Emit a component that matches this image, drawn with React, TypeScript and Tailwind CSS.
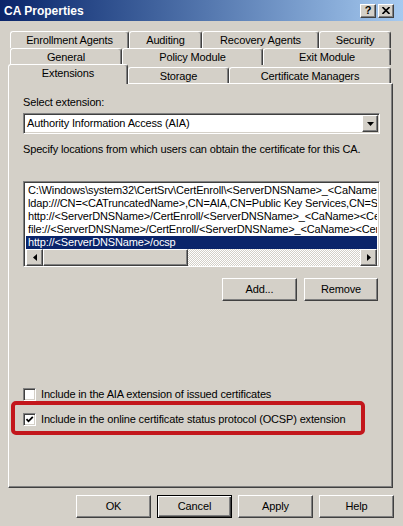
import React from 'react';

const raised =
  'border-t border-l border-t-white border-l-white border-r border-b border-r-[#404040] border-b-[#404040] shadow-[inset_-1px_-1px_#808080]';
const sunken =
  'border-t border-l border-t-[#808080] border-l-[#808080] border-r border-b border-r-white border-b-white shadow-[inset_1px_1px_#404040,inset_-1px_-1px_#d4d0c8]';

interface TabProps {
  label: string;
  width: string;
  selected?: boolean;
}

const Tab: React.FC<TabProps> = ({ label, width, selected }) => (
  <div
    className={`${width} ${
      selected ? 'relative z-10 h-[20px] pb-[3px]' : 'h-[17px]'
    } flex items-center justify-center bg-[#d4d0c8] border-t border-l border-white border-r border-r-[#404040] rounded-t-[3px] shadow-[inset_-1px_0_#808080]`}
  >
    {label}
  </div>
);

const Button: React.FC<{ label: string; width?: string; isDefault?: boolean }> = ({
  label,
  width = 'w-[75px]',
  isDefault,
}) =>
  isDefault ? (
    <button className={`${width} h-[23px] bg-[#d4d0c8] border border-black shadow-[inset_1px_1px_#fff,inset_-1px_-1px_#404040,inset_-2px_-2px_#808080]`}>
      {label}
    </button>
  ) : (
    <button className={`${width} h-[23px] bg-[#d4d0c8] ${raised}`}>{label}</button>
  );

const Checkbox: React.FC<{ checked?: boolean; label: string }> = ({ checked, label }) => (
  <div className="flex items-center h-[13px] gap-[5px]">
    <div className={`w-[13px] h-[13px] bg-white flex items-center justify-center ${sunken}`}>
      {checked && (
        <svg width="9" height="9" viewBox="0 0 9 9">
          <path d="M1.5 4.2 L3.5 6.3 L7.8 1.8" stroke="#000" strokeWidth="1.8" fill="none" />
        </svg>
      )}
    </div>
    <span>{label}</span>
  </div>
);

const listItems = [
  'C:\\Windows\\system32\\CertSrv\\CertEnroll\\<ServerDNSName>_<CaName><CertificateName>.crt',
  'ldap:///CN=<CATruncatedName>,CN=AIA,CN=Public Key Services,CN=Services,<ConfigurationContainer><CAObjectClass>',
  'http://<ServerDNSName>/CertEnroll/<ServerDNSName>_<CaName><CertificateName>.crt',
  'file://<ServerDNSName>/CertEnroll/<ServerDNSName>_<CaName><CertificateName>.crt',
  'http://<ServerDNSName>/ocsp',
];

const App: React.FC = () => {
  return (
    <div className="w-[403px] h-[526px] overflow-hidden bg-[#d4d0c8] text-black text-[11px] tracking-[-0.15px] font-['Tahoma','Liberation_Sans',sans-serif]">
      {/* title bar */}
      <div className="h-[21px] flex items-center justify-between pl-[4px] pr-[9px] bg-gradient-to-r from-[#0a246a] to-[#a6caf0]">
        <span className="text-white font-bold text-[12px] tracking-normal">CA Properties</span>
        <div className="flex gap-[2px]">
          <div className={`w-[16px] h-[14px] bg-[#d4d0c8] flex items-center justify-center font-bold text-[11px] leading-none ${raised}`}>?</div>
          <div className={`w-[16px] h-[14px] bg-[#d4d0c8] flex items-center justify-center ${raised}`}>
            <svg width="8" height="7" viewBox="0 0 8 7">
              <path d="M0.5 0 L7.5 7 M7.5 0 L0.5 7" stroke="#000" strokeWidth="1.6" />
            </svg>
          </div>
        </div>
      </div>

      {/* tabs */}
      <div className="mt-[9px] flex flex-col">
        <div className="flex ml-[10px] h-[18px] items-end">
          <Tab label="Enrollment Agents" width="w-[119px]" />
          <Tab label="Auditing" width="w-[73px]" />
          <Tab label="Recovery Agents" width="w-[117px]" />
          <Tab label="Security" width="w-[72px]" />
        </div>
        <div className="flex ml-[10px] h-[17px] items-end">
          <Tab label="General" width="w-[112px]" />
          <Tab label="Policy Module" width="w-[141px]" />
          <Tab label="Exit Module" width="w-[128px]" />
        </div>
        <div className="flex ml-[8px] h-[19px] items-end -mb-px">
          <Tab label="Extensions" width="w-[120px]" selected />
          <Tab label="Storage" width="w-[101px]" />
          <Tab label="Certificate Managers" width="w-[162px]" />
        </div>
      </div>

      {/* page */}
      <div className={`relative ml-[8px] w-[385px] h-[405px] bg-[#d4d0c8] ${raised} pl-[14px] pt-[12px]`}>
        <div className="leading-[13px]">Select extension:</div>
        <div className={`mt-[4px] w-[357px] h-[21px] bg-white flex items-center ${sunken}`}>
          <span className="flex-1 pl-[3px]">Authority Information Access (AIA)</span>
          <div className={`w-[16px] h-[17px] mr-[1px] bg-[#d4d0c8] flex items-center justify-center ${raised}`}>
            <svg width="7" height="4" viewBox="0 0 7 4">
              <path d="M0 0 H7 L3.5 4 Z" fill="#000" />
            </svg>
          </div>
        </div>
        <div className="mt-[9px] leading-[13px]">
          Specify locations from which users can obtain the certificate for this CA.
        </div>

        <div className={`mt-[25px] w-[357px] h-[86px] bg-white flex flex-col ${sunken} p-[2px]`}>
          <div className="flex flex-col">
            {listItems.map((item, i) => (
              <div
                key={i}
                className={`h-[13px] leading-[13px] pl-[2px] whitespace-nowrap overflow-hidden ${
                  i === 4 ? 'bg-[#0a246a] text-white' : ''
                }`}
              >
                {item}
              </div>
            ))}
          </div>
          <div className="flex h-[17px]">
            <div className={`w-[17px] h-[17px] bg-[#d4d0c8] flex items-center justify-center ${raised}`}>
              <svg width="4" height="7" viewBox="0 0 4 7">
                <path d="M4 0 V7 L0 3.5 Z" fill="#000" />
              </svg>
            </div>
            <div className={`w-[145px] h-[17px] bg-[#d4d0c8] ${raised}`} />
            <div className="flex-1 h-[17px] bg-[repeating-conic-gradient(#ffffff_0_25%,#d4d0c8_0_50%)] bg-[length:2px_2px]" />
            <div className={`w-[17px] h-[17px] bg-[#d4d0c8] flex items-center justify-center ${raised}`}>
              <svg width="4" height="7" viewBox="0 0 4 7">
                <path d="M0 0 V7 L4 3.5 Z" fill="#000" />
              </svg>
            </div>
          </div>
        </div>

        <div className="mt-[11px] w-[355px] flex justify-end gap-[7px]">
          <Button label="Add..." width="w-[75px]" />
          <Button label="Remove" width="w-[74px]" />
        </div>

        <div className="mt-[87px] flex flex-col gap-[12px]">
          <Checkbox label="Include in the AIA extension of issued certificates" />
          <Checkbox checked label="Include in the online certificate status protocol (OCSP) extension" />
        </div>

        {/* highlight */}
        <div className="absolute left-[2px] top-[317px] w-[354px] h-[34px] border-[4px] border-[#c3161c] rounded-[5px]" />
      </div>

      {/* dialog buttons */}
      <div className="mt-[7px] pr-[9px] flex justify-end gap-[6px]">
        <Button label="OK" />
        <Button label="Cancel" isDefault />
        <Button label="Apply" />
        <Button label="Help" />
      </div>
    </div>
  );
};

export default App;
